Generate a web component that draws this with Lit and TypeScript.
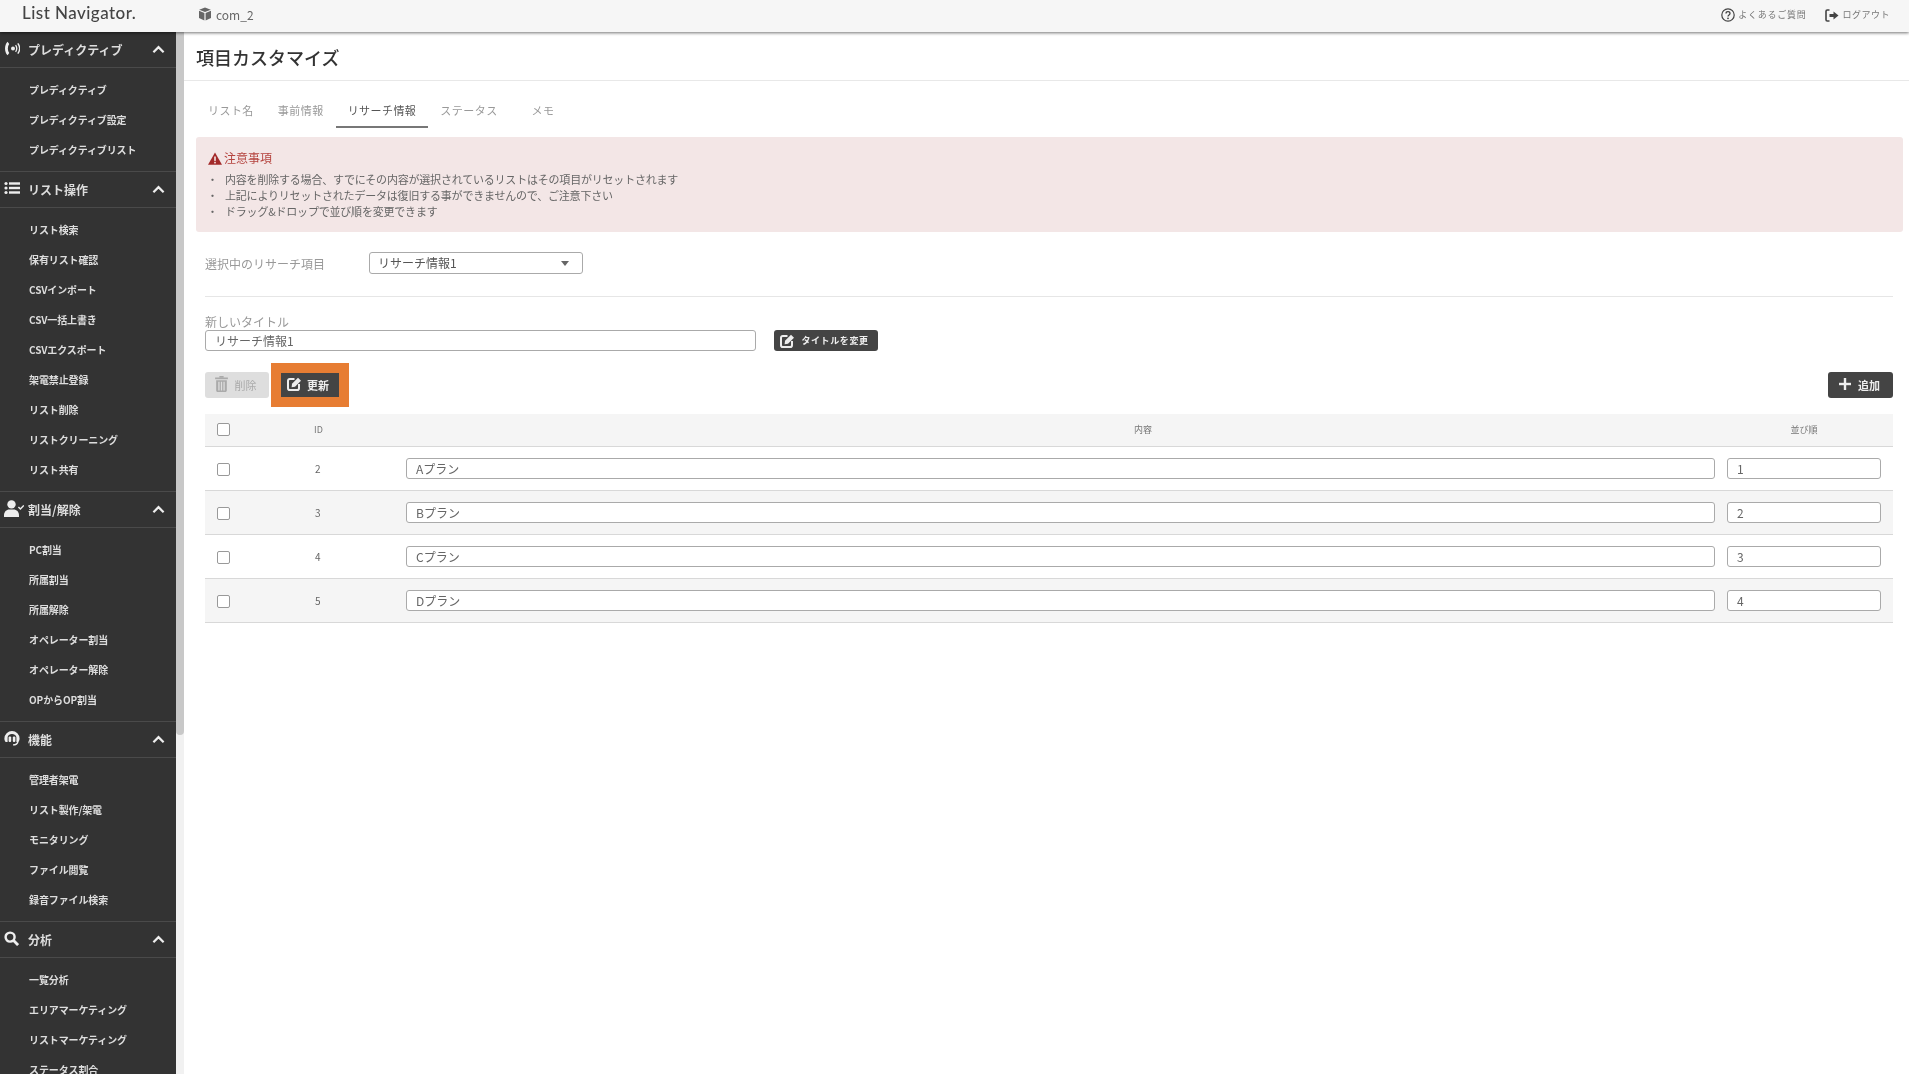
import { LitElement, html, css } from "lit";
import { customElement } from "lit/decorators.js";

const icons: Record<string, any> = {
  signal: html`<svg viewBox="0 0 16 15" width="16" height="15" fill="none" stroke="currentColor"><path d="M3.6 0.8C0.2 3.6 0.2 11.4 3.6 14.2L5.2 12C3.4 9.8 3.4 5.2 5.2 3z" fill="currentColor" stroke="none"/><circle cx="9" cy="7.5" r="2" fill="currentColor" stroke="none"/><path d="M11.6 4.2c1.4 2 1.4 4.6 0 6.6" stroke-width="1.3"/><path d="M13.8 2.4c2.2 3 2.2 7.2 0 10.2" stroke-width="1.4"/></svg>`,
  list: html`<svg viewBox="0 0 16 14" width="16" height="14" fill="currentColor"><circle cx="2" cy="2.5" r="1.6"/><circle cx="2" cy="7" r="1.6"/><circle cx="2" cy="11.5" r="1.6"/><rect x="5" y="1.3" width="11" height="2.4"/><rect x="5" y="5.8" width="11" height="2.4"/><rect x="5" y="10.3" width="11" height="2.4"/></svg>`,
  user: html`<svg viewBox="0 0 20 17" width="20" height="17" fill="currentColor"><circle cx="7.5" cy="4.4" r="4.2"/><path d="M0 17v-1.8C0 12 2.4 9.6 5.4 9.6h4.2c3 0 5.4 2.4 5.4 5.6V17z"/><path d="M14.4 7l2 2 3.4-3.6" fill="none" stroke="currentColor" stroke-width="1.5"/></svg>`,
  headset: html`<svg viewBox="0 0 16 15" width="16" height="15"><path d="M8 0a7.6 7.6 0 0 0-7.6 7.6c0 1 .3 2.4 1.2 3.4h2V6.4C3.6 4.4 5.8 3 8 3s4.4 1.4 4.4 3.4V11h2c.9-1 1.2-2.4 1.2-3.4A7.6 7.6 0 0 0 8 0z" fill="currentColor"/><rect x="4.6" y="5.6" width="2.6" height="5.4" rx="1" fill="currentColor"/><rect x="8.8" y="5.6" width="2.6" height="5.4" rx="1" fill="currentColor"/><path d="M14 10.5c-.6 2.6-2.6 3.4-5 3.4" fill="none" stroke="currentColor" stroke-width="1.3"/></svg>`,
  search: html`<svg viewBox="0 0 16 16" width="15" height="15" fill="none" stroke="currentColor"><circle cx="6.5" cy="6.5" r="4.8" stroke-width="2.6"/><path d="M10.2 10.2L15 15" stroke-width="3"/></svg>`,
  chevron: html`<svg viewBox="0 0 14 9" width="13" height="9" fill="none" stroke="currentColor" stroke-width="2.4"><path d="M1.5 7.5L7 2l5.5 5.5"/></svg>`,
  cube: html`<svg viewBox="0 0 14 14" width="14" height="14" fill="currentColor"><path d="M7 0.5l5.8 2.2L7 5 1.2 2.7z"/><path d="M1 3.8l5.4 2.2v7.4L1 11z"/><path d="M13 3.8L7.6 6v7.4L13 11z"/></svg>`,
  help: html`<svg viewBox="0 0 14 14" width="14" height="14" fill="none" stroke="currentColor"><circle cx="7" cy="7" r="6.2" stroke-width="1.2"/><path d="M5 5.4C5 4.2 5.9 3.6 7 3.6s2 .7 2 1.8c0 1.5-2 1.5-2 3" stroke-width="1.3"/><circle cx="7" cy="10.3" r=".9" fill="currentColor" stroke="none"/></svg>`,
  logout: html`<svg viewBox="0 0 14 13" width="14" height="13" fill="currentColor"><path d="M4.5 1H2.2C1.4 1 1 1.4 1 2.2v8.6c0 .8.4 1.2 1.2 1.2h2.3" fill="none" stroke="currentColor" stroke-width="1.6"/><path d="M4.5 5h4V2.5L13.5 6.5l-5 4V8h-4z"/></svg>`,
  warn: html`<svg viewBox="0 0 14 13" width="14" height="13"><path d="M7 0.5L14 12.8H0z" fill="#a32a2a"/><rect x="6.2" y="4.5" width="1.6" height="4.4" fill="#f3e6e6"/><rect x="6.2" y="9.8" width="1.6" height="1.6" fill="#f3e6e6"/></svg>`,
  edit: html`<svg viewBox="0 0 15 14" width="15" height="14" fill="none" stroke="currentColor"><path d="M7.5 2H2.8C1.6 2 1 2.6 1 3.8v7.4C1 12.4 1.6 13 2.8 13h7.4c1.2 0 1.8-.6 1.8-1.8V7" stroke-width="2"/><path d="M5 6.8L11 .8l3 3-6 6-3.4.5z" fill="currentColor" stroke="none"/></svg>`,
  trash: html`<svg viewBox="0 0 12 15" width="13" height="16" fill="currentColor"><rect x="0" y="1.4" width="12" height="1.6"/><rect x="4" y="0" width="4" height="1.6"/><path d="M1 4h10v9.6c0 .8-.6 1.4-1.4 1.4H2.4C1.6 15 1 14.4 1 13.6zM3 5.5v8h1.2v-8zm2.4 0v8h1.2v-8zm2.4 0v8H9v-8z" fill-rule="evenodd"/></svg>`,
  plus: html`<svg viewBox="0 0 12 12" width="12" height="12" fill="currentColor"><rect x="4.8" y="0" width="2.4" height="12"/><rect x="0" y="4.8" width="12" height="2.4"/></svg>`,
};

const menu = [
  { icon: "signal", title: "プレディクティブ", items: ["プレディクティブ", "プレディクティブ設定", "プレディクティブリスト"] },
  { icon: "list", title: "リスト操作", items: ["リスト検索", "保有リスト確認", "CSVインポート", "CSV一括上書き", "CSVエクスポート", "架電禁止登録", "リスト削除", "リストクリーニング", "リスト共有"] },
  { icon: "user", title: "割当/解除", items: ["PC割当", "所属割当", "所属解除", "オペレーター割当", "オペレーター解除", "OPからOP割当"] },
  { icon: "headset", title: "機能", items: ["管理者架電", "リスト製作/架電", "モニタリング", "ファイル閲覧", "録音ファイル検索"] },
  { icon: "search", title: "分析", items: ["一覧分析", "エリアマーケティング", "リストマーケティング", "ステータス割合"] },
];

const rows = [
  { id: 2, name: "Aプラン", order: 1 },
  { id: 3, name: "Bプラン", order: 2 },
  { id: 4, name: "Cプラン", order: 3 },
  { id: 5, name: "Dプラン", order: 4 },
];

@customElement("app-root")
export class AppRoot extends LitElement {
  static styles = css`
    :host {
      display: flex;
      flex-direction: column;
      height: 100vh;
      overflow: hidden;
      background: #fff;
      color: #555;
      font-family: "Noto Sans CJK JP", "Noto Sans", sans-serif;
      filter: blur(0.4px);
    }
    * { box-sizing: border-box; }
    .top {
      flex: none;
      height: 32px;
      display: flex;
      align-items: center;
      background: #f6f6f6;
      box-shadow: 0 1px 3px rgba(0,0,0,.55);
      position: relative;
      z-index: 2;
      padding: 0 19px 0 22px;
    }
    .logo { font: 500 17px/20px Lato, sans-serif; letter-spacing: .45px; color: #444; width: 176px; margin-top: -6px; }
    .com { display: flex; align-items: center; gap: 4px; font-size: 12px; line-height: 16px; color: #666; margin-top: -3px; }
    .com svg { margin-top: -2px; }
    .spacer { flex: 1; }
    .link { display: flex; align-items: center; gap: 3px; font-size: 9px; line-height: 14px; color: #777; letter-spacing: .5px; margin-left: 19px; margin-top: -2px; }
    .link.wide { letter-spacing: .75px; }
    .link svg { color: #444; }
    .body { flex: 1; display: flex; min-height: 0; }
    .side { flex: none; width: 176px; background: #333; color: #ddd; overflow: hidden; }
    .gh { height: 36px; display: flex; align-items: center; padding: 0 11px 0 4px; border-bottom: 1px solid #4a4a4a; font-size: 12px; font-weight: 700; color: #ddd; }
    .gh .ic { width: 24px; display: flex; color: #eee; margin-top: -3px; }
    .gh .t { flex: 1; line-height: 16px; }
    .gh .ch { display: flex; color: #eee; }
    .items { padding: 6px 0 7px; border-bottom: 1px solid #4a4a4a; }
    .item { height: 30px; display: flex; align-items: center; padding-left: 29px; font-size: 10px; font-weight: 700; letter-spacing: -.12px; color: #ddd; }
    .sb { flex: none; width: 8px; background: #f1f1f1; }
    .sb div { height: 703px; background: #c8c8c8; border-radius: 0 0 4px 4px; }
    .main { flex: 1; min-width: 0; padding-right: 6px; }
    .title { height: 49px; margin-right: -6px; padding: 2px 0 0 12px; display: flex; align-items: center; border-bottom: 1px solid #e8e8e8; font-size: 18px; font-weight: 500; color: #333; }
    .tabs { display: flex; height: 47px; margin-left: 12px; padding-top: 21px; font-size: 11px; line-height: 16px; color: #999; letter-spacing: .45px; }
    .tab { padding: 0 12px; height: 26px; }
    .tab.on { color: #555; border-bottom: 2px solid #777; }
    .tab.memo { margin-left: 10px; }
    .alert { margin: 9px 0 0 12px; height: 95px; padding: 12px; background: #f3e6e6; border-radius: 3px; font-size: 11px; line-height: 16px; letter-spacing: -.2px; color: #666; }
    .alert h4 { margin: 0 0 4px; display: flex; align-items: center; gap: 2px; font-size: 12px; line-height: 18px; font-weight: 400; letter-spacing: 0; color: #b5443f; }
    .alert ul { margin: 0; padding: 0; list-style: none; }
    .alert li { display: flex; }
    .alert li::before { content: "・"; width: 18px; margin-left: -1px; flex: none; }
    .wrap { padding: 0 10px 0 21px; }
    .selrow { display: flex; align-items: center; height: 22px; margin-top: 20px; font-size: 12px; color: #999; }
    .selrow label { width: 164px; }
    .sel { width: 214px; height: 22px; padding: 0 8px; display: flex; align-items: center; justify-content: space-between; border: 1px solid #aaa; border-radius: 3px; color: #555; line-height: 16px; }
    .caret { width: 0; height: 0; border: 4.5px solid transparent; border-top: 5px solid #666; border-bottom: 0; margin-right: 5px; }
    .hr { height: 1px; background: #e6e6e6; margin-top: 22px; }
    .lbl { font-size: 12px; line-height: 16px; color: #999; margin-top: 17px; }
    .titlerow { display: flex; align-items: center; gap: 18px; }
    .input { height: 21px; display: flex; align-items: center; padding: 0 9px; border: 1px solid #aaa; border-radius: 3px; background: #fff; font-size: 12px; color: #666; line-height: 16px; }
    .titlerow .input { width: 551px; }
    .btn { display: flex; align-items: center; justify-content: center; background: #444; color: #eee; font-size: 9px; font-weight: 700; border-radius: 3px; }
    .tbtn { width: 104px; height: 21px; gap: 6px; letter-spacing: .6px; padding-right: 3px; }
    .acts { display: flex; align-items: center; height: 44px; margin-top: 12px; }
    .del { width: 64px; height: 26px; background: #dedede; color: #aaa; gap: 7px; font-weight: 400; font-size: 11px; margin-right: 2px; padding-right: 3px; }
    .del svg { margin-top: -3px; }
    .hl { background: #e77d33; padding: 10px; height: 44px; width: 78px; }
    .upd { height: 24px; width: 58px; gap: 5px; border-radius: 0; font-size: 11px; padding-right: 4px; }
    .upd svg { margin-top: -2px; }
    .add { width: 65px; height: 26px; gap: 7px; font-size: 11px; padding-right: 2px; }
    .add svg { margin-top: -2px; }
    .grid { display: grid; grid-template-columns: 36px 153px 1fr 173px; margin-top: 7px; color: #666; }
    .cell { display: flex; align-items: center; border-bottom: 1px solid #d8d8d8; height: 44px; }
    .grid .h { height: 33px; padding-bottom: 2px; background: #f5f5f5; font-size: 9px; color: #777; }
    .gray { background: #f5f5f5; }
    .ck { width: 13px; height: 13px; margin-left: 12px; border: 1.5px solid #999; border-radius: 2px; background: #fff; }
    .row .ck { margin-top: 2px; }
    .c-id { padding-left: 74px; font-size: 10px; }
    .h.c-id { padding-left: 73px; }
    .row .c-id { padding-top: 5px; }
    .c-name { padding: 0 5px 0 12px; }
    .h.c-name { padding-left: 172px; padding-right: 0; justify-content: center; }
    .cell .input { width: 100%; height: 21px; }
    .c-ord { padding: 0 12px 0 7px; justify-content: center; }
  `;

  render() {
    return html`
      <div class="top">
        <div class="logo">List Navigator.</div>
        <div class="com">${icons.cube}<span>com_2</span></div>
        <div class="spacer"></div>
        <div class="link wide">${icons.help}<span>よくあるご質問</span></div>
        <div class="link">${icons.logout}<span>ログアウト</span></div>
      </div>
      <div class="body">
        <nav class="side">
          ${menu.map(
            (g) => html`
              <div class="gh"><span class="ic">${icons[g.icon]}</span><span class="t">${g.title}</span><span class="ch">${icons.chevron}</span></div>
              <div class="items">${g.items.map((i) => html`<div class="item">${i}</div>`)}</div>
            `
          )}
        </nav>
        <div class="sb"><div></div></div>
        <main class="main">
          <div class="title">項目カスタマイズ</div>
          <div class="tabs">
            <div class="tab">リスト名</div>
            <div class="tab">事前情報</div>
            <div class="tab on">リサーチ情報</div>
            <div class="tab">ステータス</div>
            <div class="tab memo">メモ</div>
          </div>
          <div class="alert">
            <h4>${icons.warn}<span>注意事項</span></h4>
            <ul>
              <li>内容を削除する場合、すでにその内容が選択されているリストはその項目がリセットされます</li>
              <li>上記によりリセットされたデータは復旧する事ができませんので、ご注意下さい</li>
              <li>ドラッグ&ドロップで並び順を変更できます</li>
            </ul>
          </div>
          <div class="wrap">
            <div class="selrow"><label>選択中のリサーチ項目</label><div class="sel"><span>リサーチ情報1</span><span class="caret"></span></div></div>
            <div class="hr"></div>
            <div class="lbl">新しいタイトル</div>
            <div class="titlerow">
              <div class="input">リサーチ情報1</div>
              <div class="btn tbtn">${icons.edit}<span>タイトルを変更</span></div>
            </div>
            <div class="acts">
              <div class="btn del">${icons.trash}<span>削除</span></div>
              <div class="hl"><div class="btn upd">${icons.edit}<span>更新</span></div></div>
              <div class="spacer"></div>
              <div class="btn add">${icons.plus}<span>追加</span></div>
            </div>
            <div class="grid">
              <div class="cell h"><span class="ck"></span></div>
              <div class="cell h c-id">ID</div>
              <div class="cell h c-name">内容</div>
              <div class="cell h c-ord">並び順</div>
              ${rows.map((r, i) => {
                const g = i % 2 ? "gray" : "";
                return html`
                  <div class="cell row ${g}"><span class="ck"></span></div>
                  <div class="cell row c-id ${g}">${r.id}</div>
                  <div class="cell row c-name ${g}"><div class="input">${r.name}</div></div>
                  <div class="cell row c-ord ${g}"><div class="input">${r.order}</div></div>
                `;
              })}
            </div>
          </div>
        </main>
      </div>
    `;
  }
}
